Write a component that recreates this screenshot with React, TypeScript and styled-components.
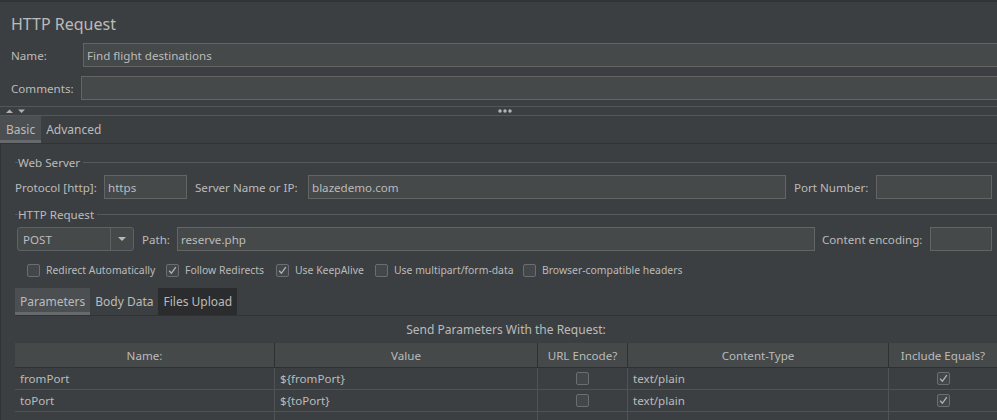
import React from "react";
import styled, { createGlobalStyle } from "styled-components";

const GlobalStyle = createGlobalStyle`
  html, body { margin: 0; padding: 0; background: #3c3f41; }
  body {
    font-family: "Noto Sans", "DejaVu Sans", sans-serif;
    font-size: 11.6px;
    color: #bbbbbb;
  }
  * { box-sizing: border-box; }
`;

const Page = styled.div`
  width: 997px;
  height: 420px;
  overflow: hidden;
  background: #3c3f41;
  border-top: 2px solid #313335;
`;

const Header = styled.div`
  padding-left: 11px;
  display: flex;
  flex-direction: column;
`;

const Title = styled.div`
  font-size: 16px;
  line-height: 22px;
  margin-top: 11px;
`;

const FieldRow = styled.div<{ $top: number; $bleed?: boolean }>`
  display: flex;
  align-items: center;
  height: 24px;
  margin-top: ${(p) => p.$top}px;
  margin-right: ${(p) => (p.$bleed ? -6 : 0)}px;
`;

const FieldLabel = styled.span<{ $w: number; $ml?: number }>`
  flex: none;
  width: ${(p) => p.$w}px;
  margin-left: ${(p) => p.$ml ?? 0}px;
  white-space: nowrap;
`;

const TextInput = styled.input<{ $w?: number }>`
  height: 24px;
  background: #45494a;
  border: 1px solid #646464;
  border-radius: 0;
  padding: 0 3px;
  margin: 0;
  font: inherit;
  color: #bbbbbb;
  outline: none;
  ${(p) => (p.$w ? `width: ${p.$w}px; flex: none;` : `flex: 1; min-width: 0;`)}
`;

const Splitter = styled.div`
  margin-top: 6px;
  height: 10px;
  border-top: 1px solid #545759;
  border-bottom: 1px solid #545759;
  display: flex;
  align-items: center;
`;

const SplitArrows = styled.svg`
  margin-left: 6px;
  flex: none;
`;

const SplitDots = styled.svg`
  margin-left: 473px;
  flex: none;
`;

const TabStrip = styled.div<{ $line?: boolean; $top?: number }>`
  display: flex;
  height: ${(p) => (p.$line ? 28 : 27)}px;
  margin-top: ${(p) => p.$top ?? 0}px;
  ${(p) => (p.$line ? `border-bottom: 1px solid #303234; margin-right: -5px;` : ``)}
`;

const Tab = styled.div<{ $active?: boolean; $dark?: boolean; $pad?: number }>`
  height: 27px;
  padding: 2px ${(p) => p.$pad ?? 5}px 0;
  font-size: 12px;
  display: flex;
  align-items: center;
  white-space: nowrap;
  background: ${(p) => (p.$active ? "#4b4f52" : p.$dark ? "#2b2c2d" : "transparent")};
  border-bottom: 3px solid ${(p) => (p.$active ? "#666a6d" : "transparent")};
`;

const Panel = styled.div`
  border-top: 1px solid #313335;
  border-left: 1px solid #313335;
  padding: 0 5px 0 14px;
  height: 277px;
  display: flex;
  flex-direction: column;
  & > * { flex-shrink: 0; }
`;

const GroupTitle = styled.div<{ $top: number }>`
  margin-top: ${(p) => p.$top}px;
  margin-right: -5px;
  height: 14px;
  display: flex;
  align-items: center;
  white-space: nowrap;
  &::before {
    content: "";
    width: 3px;
    height: 1px;
    background: #575a5c;
    flex: none;
  }
  &::after {
    content: "";
    flex: 1;
    height: 1px;
    margin-left: 3px;
    background: #575a5c;
  }
`;

const Combo = styled.div`
  margin-left: 2px;
  width: 117px;
  height: 24px;
  border: 1px solid #5f6264;
  border-radius: 3px;
  background: #45494a;
  display: flex;
  flex: none;
`;

const ComboValue = styled.div`
  flex: 1;
  padding-left: 5px;
  display: flex;
  align-items: center;
  border-right: 1px solid #5f6264;
`;

const ComboArrow = styled.div`
  width: 22px;
  display: flex;
  align-items: center;
  justify-content: center;
`;

const OptionRow = styled.div`
  margin-top: 12px;
  height: 14px;
  padding-left: 12px;
  display: flex;
  align-items: center;
`;

const Option = styled.div<{ $w?: number }>`
  display: flex;
  align-items: center;
  gap: 6px;
  font-size: 10.4px;
  white-space: nowrap;
  ${(p) => (p.$w ? `width: ${p.$w}px; flex: none;` : ``)}
`;

const Box = styled.span`
  width: 13px;
  height: 13px;
  flex: none;
  border: 1px solid #6b6e70;
  border-radius: 2px;
  background: #43474a;
  display: inline-flex;
  align-items: center;
  justify-content: center;
`;

const Caption = styled.div`
  height: 27px;
  margin-right: -5px;
  font-size: 12px;
  display: flex;
  align-items: center;
  justify-content: center;
`;

const Table = styled.div`
  margin-right: -5px;
  display: flex;
  flex-direction: column;
  & > * { flex-shrink: 0; }
`;

const TableRow = styled.div<{ $head?: boolean }>`
  display: grid;
  grid-template-columns: 260px 263px 90px 261px 1fr;
  height: ${(p) => (p.$head ? 25 : 22)}px;
  background: ${(p) => (p.$head ? "#45494a" : "transparent")};
  border-bottom: 1px solid ${(p) => (p.$head ? "#2e3032" : "#505355")};
`;

const Cell = styled.div<{ $head?: boolean; $center?: boolean }>`
  display: flex;
  align-items: center;
  justify-content: ${(p) => (p.$center || p.$head ? "center" : "flex-start")};
  padding-left: ${(p) => (p.$center || p.$head ? 0 : 5)}px;
  white-space: nowrap;
  overflow: hidden;
  border-right: 1px solid ${(p) => (p.$head ? "#2e3032" : "#505355")};
  &:last-child { border-right: none; }
`;

function Check({ on }: { on?: boolean }) {
  return (
    <Box>
      {on && (
        <svg width="9" height="9" viewBox="0 0 9 9">
          <polyline points="1.2,4.8 3.4,7.3 7.8,1.2" fill="none" stroke="#b4b4b4" strokeWidth="1.3" />
        </svg>
      )}
    </Box>
  );
}

const rows = [
  { name: "fromPort", value: "${fromPort}", type: "text/plain" },
  { name: "toPort", value: "${toPort}", type: "text/plain" },
];

export default function App() {
  return (
    <>
      <GlobalStyle />
      <Page>
        <Header>
          <Title>HTTP Request</Title>
          <FieldRow $top={8} $bleed>
            <FieldLabel $w={72}>Name:</FieldLabel>
            <TextInput readOnly value="Find flight destinations" />
          </FieldRow>
          <FieldRow $top={9} $bleed>
            <FieldLabel $w={70}>Comments:</FieldLabel>
            <TextInput readOnly value="" />
          </FieldRow>
        </Header>
        <Splitter>
          <SplitArrows width="19" height="5" viewBox="0 0 19 5">
            <polygon points="0,4 3.5,0.5 7,4" fill="#b0b0b0" />
            <polygon points="12,0.5 19,0.5 15.5,4" fill="#b0b0b0" />
          </SplitArrows>
          <SplitDots width="14" height="4" viewBox="0 0 14 4">
            <circle cx="2" cy="2" r="1.7" fill="#b5b5b5" />
            <circle cx="7" cy="2" r="1.7" fill="#b5b5b5" />
            <circle cx="12" cy="2" r="1.7" fill="#b5b5b5" />
          </SplitDots>
        </Splitter>
        <TabStrip>
          <Tab $active $pad={6}>Basic</Tab>
          <Tab>Advanced</Tab>
        </TabStrip>
        <Panel>
          <GroupTitle $top={11}>Web Server</GroupTitle>
          <FieldRow $top={6}>
            <FieldLabel $w={89}>Protocol [http]:</FieldLabel>
            <TextInput $w={83} readOnly value="https" />
            <FieldLabel $w={113} $ml={8}>Server Name or IP:</FieldLabel>
            <TextInput readOnly value="blazedemo.com" />
            <FieldLabel $w={82} $ml={8}>Port Number:</FieldLabel>
            <TextInput $w={116} readOnly value="" />
          </FieldRow>
          <GroupTitle $top={8}>HTTP Request</GroupTitle>
          <FieldRow $top={6}>
            <Combo>
              <ComboValue>POST</ComboValue>
              <ComboArrow>
                <svg width="8" height="4" viewBox="0 0 8 4">
                  <polygon points="0,0 8,0 4,4" fill="#b8b8b8" />
                </svg>
              </ComboArrow>
            </Combo>
            <FieldLabel $w={35} $ml={8}>Path:</FieldLabel>
            <TextInput readOnly value="reserve.php" />
            <FieldLabel $w={108} $ml={7}>Content encoding:</FieldLabel>
            <TextInput $w={62} readOnly value="" />
          </FieldRow>
          <OptionRow>
            <Option $w={139}><Check />Redirect Automatically</Option>
            <Option $w={110}><Check on />Follow Redirects</Option>
            <Option $w={99}><Check on />Use KeepAlive</Option>
            <Option $w={148}><Check />Use multipart/form-data</Option>
            <Option><Check />Browser-compatible headers</Option>
          </OptionRow>
          <TabStrip $line $top={11}>
            <Tab $active>Parameters</Tab>
            <Tab>Body Data</Tab>
            <Tab $dark>Files Upload</Tab>
          </TabStrip>
          <Caption>Send Parameters With the Request:</Caption>
          <Table>
            <TableRow $head>
              <Cell $head>Name:</Cell>
              <Cell $head>Value</Cell>
              <Cell $head>URL Encode?</Cell>
              <Cell $head>Content-Type</Cell>
              <Cell $head>Include Equals?</Cell>
            </TableRow>
            {rows.map((r) => (
              <TableRow key={r.name}>
                <Cell>{r.name}</Cell>
                <Cell>{r.value}</Cell>
                <Cell $center><Check /></Cell>
                <Cell>{r.type}</Cell>
                <Cell $center><Check on /></Cell>
              </TableRow>
            ))}
            <TableRow>
              <Cell />
              <Cell />
              <Cell />
              <Cell />
              <Cell />
            </TableRow>
          </Table>
        </Panel>
      </Page>
    </>
  );
}
